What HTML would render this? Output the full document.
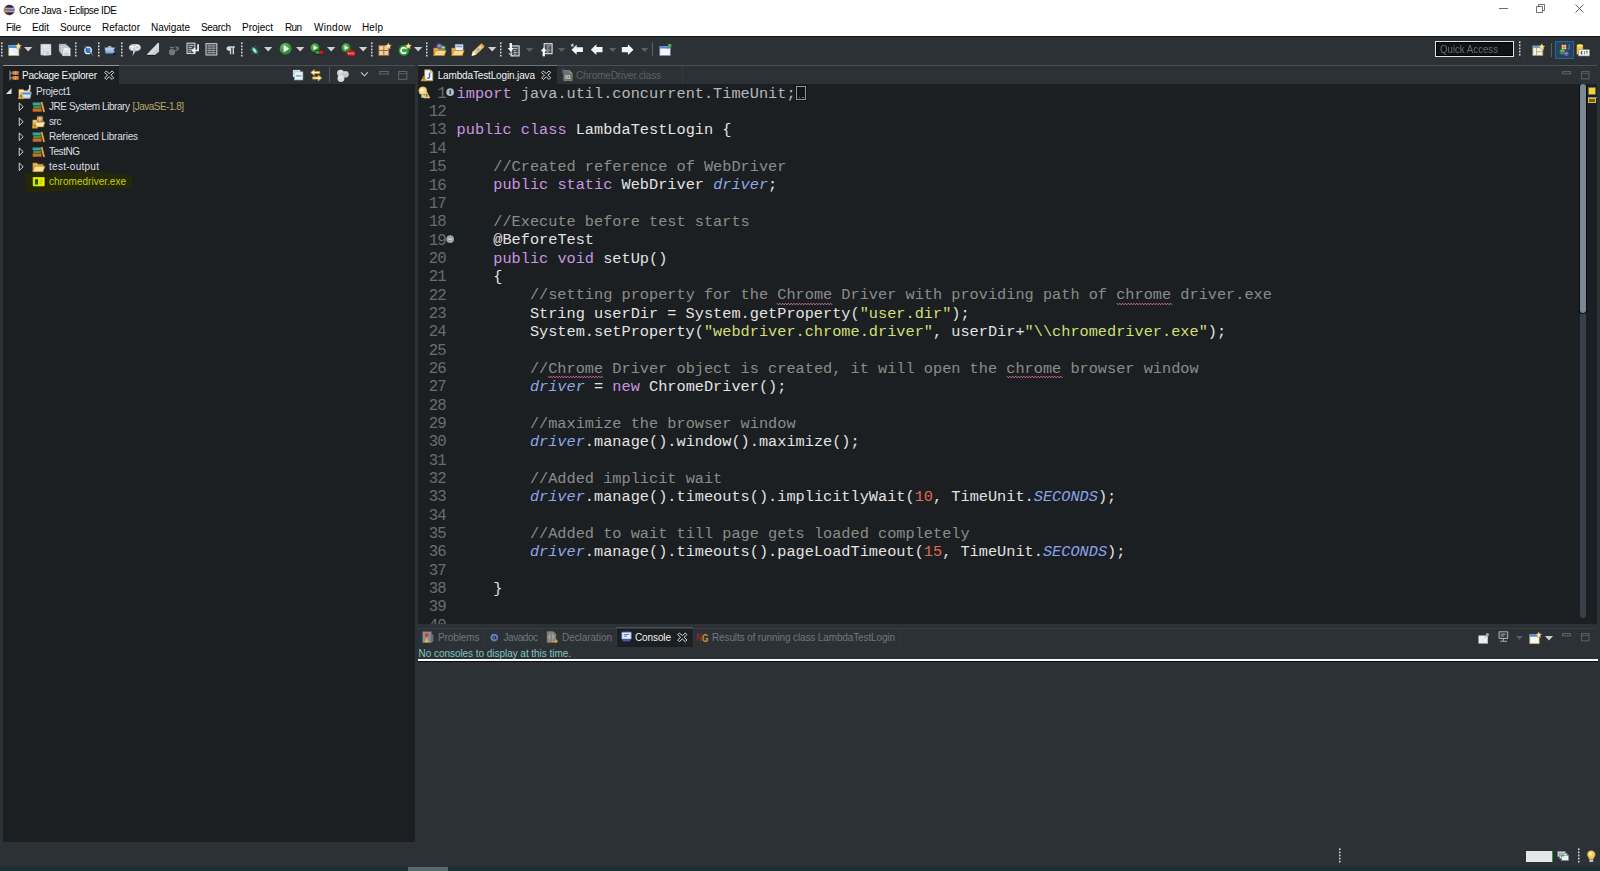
<!DOCTYPE html>
<html lang="en">
<head>
<meta charset="utf-8">
<title>Core Java - Eclipse IDE</title>
<style>
*{box-sizing:border-box;margin:0;padding:0}
html,body{width:1600px;height:871px;overflow:hidden;background:#2c3135}
body{position:relative;font-family:"Liberation Sans",sans-serif;font-size:10px;color:#e6e6e6}
.abs{position:absolute}
.t{position:absolute;white-space:nowrap;line-height:12px;height:12px}
.dark{background:#1c1f22}
#code{font-family:"Liberation Mono",monospace;font-size:15.28px;line-height:18.355px;color:#e3e3e3}
#code div{height:18.355px;white-space:pre}
#lnum{width:28.3px;text-align:right;font-family:"Liberation Mono",monospace;font-size:15.7px;letter-spacing:-0.9px;line-height:18.355px;color:#6b6c6a}
#lnum div{height:18.355px}
.k{color:#c896e0}.c{color:#8b8c88}.s{color:#d3df75}.n{color:#e0685a}.f{color:#8fa6e8;font-style:italic}.i{color:#b4b8bc}.sc{color:#88a3ee;font-style:italic}
svg{position:absolute;overflow:visible}
</style>
</head>
<body>
<div class="abs" style="left:0px;top:0px;width:1600px;height:36px;background:#fff;"></div>
<svg style="left:2.80px;top:3.60px" width="12.00" height="12.00" viewBox="0 0 16 16"><circle cx="8" cy="8" r="7.300" fill="#f2941e"/><circle cx="8.800" cy="8" r="6.800" fill="#2c2255"/><path d="M2.500 5.700h12.800M2 8h13.600M2.500 10.300h12.800" stroke="#f4f4fa" stroke-width="1.100"/></svg>
<svg style="left:1499px;top:8px" width="9" height="1" viewBox="0 0 9 1"><rect width="9" height=".8" fill="#4a4a4a"/></svg>
<svg style="left:1536px;top:4px" width="9" height="9" viewBox="0 0 9 9"><path d="M.5 2.500h6v6h-6zM2.500 2.500V.5h6v6H6.500" fill="none" stroke="#444" stroke-width=".75"/></svg>
<svg style="left:1575px;top:4px" width="9" height="9" viewBox="0 0 9 9"><path d="M.5.5l8 8M8.500.5l-8 8" stroke="#333" stroke-width=".8"/></svg>
<div class="abs" style="left:0px;top:36px;width:1600px;height:1px;background:#121416;"></div>
<svg style="left:1.00px;top:42.00px" width="2" height="15" viewBox="0 0 2 15"><rect x="0" y="0.40" width="1.5" height="1.7" fill="#dcdcdc"/><rect x="0" y="3.50" width="1.5" height="1.7" fill="#dcdcdc"/><rect x="0" y="6.60" width="1.5" height="1.7" fill="#dcdcdc"/><rect x="0" y="9.70" width="1.5" height="1.7" fill="#dcdcdc"/><rect x="0" y="12.80" width="1.5" height="1.7" fill="#dcdcdc"/></svg>
<svg style="left:7.50px;top:42.70px" width="13.33" height="13.33" viewBox="0 0 16 16"><defs><linearGradient id="gnew" x1="0" y1="1" x2="1" y2="0"><stop offset="0" stop-color="#ffffff"/><stop offset="1" stop-color="#cfe4fa"/></linearGradient></defs><rect x="1" y="3" width="12" height="12" fill="url(#gnew)" stroke="#d8b866" stroke-width=".9"/><rect x="1" y="3" width="12" height="3" fill="#3f8fdc"/><path d="M12.500 0l1.100 2.400 2.400.4-1.800 1.700.5 2.500-2.200-1.300-2.200 1.300.5-2.500L9 2.800l2.400-.4z" fill="#fbe9ae" stroke="#d9a93a" stroke-width=".6"/></svg>
<svg style="left:24.00px;top:47.00px" width="8.4" height="5" viewBox="0 0 8.4 5"><path d="M0 0H8.4L4.2 4.6Z" fill="#d0d0d0"/></svg>
<svg style="left:39.00px;top:42.70px" width="13.33" height="13.33" viewBox="0 0 16 16"><path d="M1.500 1h12.500l1 1v13H1.500z" fill="#dfe1e4" stroke="#0f1113" stroke-width=".6"/><rect x="4" y="1.800" width="8.500" height="5.200" fill="#f3f4f5" stroke="#b4b7bb" stroke-width=".5"/><path d="M5 3.500h6.500M5 5.200h6.500" stroke="#c4c7cb" stroke-width=".6"/><rect x="4.500" y="10" width="7.500" height="5" fill="#c9ccd0"/><rect x="6" y="11" width="2" height="3.500" fill="#eceef0"/></svg>
<svg style="left:58.00px;top:42.70px" width="13.33" height="13.33" viewBox="0 0 16 16"><path d="M1 1h8.500l1.500 1.500V11H1z" fill="#d3d6d9" stroke="#0f1113" stroke-width=".5"/><path d="M3 3h8.500L13 4.500V13H3z" fill="#dcdfe2" stroke="#7d8186" stroke-width=".5"/><path d="M5 5h8.500L15 6.500V15.500H5z" fill="#e4e6e9" stroke="#7d8186" stroke-width=".5"/><rect x="7" y="6" width="5.500" height="3.300" fill="#f5f6f7" stroke="#b4b7bb" stroke-width=".4"/><rect x="7.500" y="11.500" width="5" height="4" fill="#c9ccd0"/></svg>
<svg style="left:75.00px;top:42.00px" width="2" height="15" viewBox="0 0 2 15"><rect x="0" y="0.40" width="1.5" height="1.7" fill="#dcdcdc"/><rect x="0" y="3.50" width="1.5" height="1.7" fill="#dcdcdc"/><rect x="0" y="6.60" width="1.5" height="1.7" fill="#dcdcdc"/><rect x="0" y="9.70" width="1.5" height="1.7" fill="#dcdcdc"/><rect x="0" y="12.80" width="1.5" height="1.7" fill="#dcdcdc"/></svg>
<svg style="left:80.50px;top:42.70px" width="13.33" height="13.33" viewBox="0 0 16 16"><circle cx="8.500" cy="9" r="3.900" fill="#2f80c8" stroke="#e4ecf5" stroke-width="1.500"/><path d="M3.500 3.500l10.500 11.500" stroke="#1f3f86" stroke-width="1.300"/><path d="M4.200 3.500l10.500 11.500" stroke="#dbe6f3" stroke-width=".5"/></svg>
<svg style="left:98.00px;top:42.00px" width="2" height="15" viewBox="0 0 2 15"><rect x="0" y="0.40" width="1.5" height="1.7" fill="#dcdcdc"/><rect x="0" y="3.50" width="1.5" height="1.7" fill="#dcdcdc"/><rect x="0" y="6.60" width="1.5" height="1.7" fill="#dcdcdc"/><rect x="0" y="9.70" width="1.5" height="1.7" fill="#dcdcdc"/><rect x="0" y="12.80" width="1.5" height="1.7" fill="#dcdcdc"/></svg>
<svg style="left:103.00px;top:42.70px" width="13.33" height="13.33" viewBox="0 0 16 16"><defs><linearGradient id="gbf" x1="0" y1="0" x2="0" y2="1"><stop offset="0" stop-color="#c4d8f2"/><stop offset="1" stop-color="#7fa6de"/></linearGradient></defs><path d="M2 5.500h12.500l-1.500 3 1.500 4H3z" fill="url(#gbf)" stroke="#3f66a8" stroke-width=".6"/><path d="M5.500 5.500c0-2 5-2 5 0" fill="#f1e4cf" stroke="#c8b48f" stroke-width=".5"/><path d="M12.500 11l3 2-3 2z" fill="#0c0d0f"/></svg>
<svg style="left:121.40px;top:42.00px" width="2" height="15" viewBox="0 0 2 15"><rect x="0" y="0.40" width="1.5" height="1.7" fill="#dcdcdc"/><rect x="0" y="3.50" width="1.5" height="1.7" fill="#dcdcdc"/><rect x="0" y="6.60" width="1.5" height="1.7" fill="#dcdcdc"/><rect x="0" y="9.70" width="1.5" height="1.7" fill="#dcdcdc"/><rect x="0" y="12.80" width="1.5" height="1.7" fill="#dcdcdc"/></svg>
<svg style="left:127.50px;top:42.70px" width="13.33" height="13.33" viewBox="0 0 16 16"><path d="M1 5.500C1 3 3.400 1.200 7 1.200h3c3.500 0 5.500 1.800 5.500 4.300S13.500 9.800 10 9.800H9L5.500 15.500l.7-5.800C3 9.500 1 8 1 5.500z" fill="#c6c9cd"/><circle cx="11" cy="5.200" r="2.300" fill="#c6c9cd" stroke="#fafafa" stroke-width="1.200"/><rect x="2.300" y="3.600" width="5.500" height="1.600" fill="#fafafa"/><rect x="4.200" y="3.600" width="1.700" height="4.800" fill="#fafafa"/></svg>
<svg style="left:146.50px;top:42.70px" width="13.33" height="13.33" viewBox="0 0 16 16"><defs><linearGradient id="gtri" x1="0" y1="0" x2="1" y2="1"><stop offset="0" stop-color="#ffffff"/><stop offset="1" stop-color="#b9bcc0"/></linearGradient></defs><path d="M13 0h1.500v10.500L9.500 14.500H0V13.500z" fill="url(#gtri)"/><path d="M0 14.800h9" stroke="#0c0d0f" stroke-width=".8"/></svg>
<svg style="left:166.50px;top:42.70px" width="13.33" height="13.33" viewBox="0 0 16 16"><circle cx="6" cy="11" r="3.700" fill="#74787d"/><path d="M3.500 5.500h5" stroke="#74787d" stroke-width="1.600"/><path d="M10.500 3.500l1.500 3.500M13 4.500l.8 3.500M9.500 9.500l4.500-2" stroke="#74787d" stroke-width="1.400" fill="none"/></svg>
<svg style="left:185.50px;top:42.70px" width="13.33" height="13.33" viewBox="0 0 16 16"><rect x="1.200" y=".2" width="9.500" height="12.500" fill="#45494f" stroke="#dcdee0" stroke-width="1.200"/><path d="M3 3h6M3 5.500h4M3 8h5.500M3 10.500h3" stroke="#cfd2d5" stroke-width="1"/><path d="M14.500 1.500v7.500H8.500M11 6.200L8 9l3 2.800" stroke="#f4f4f4" stroke-width="2" fill="none"/></svg>
<svg style="left:204.50px;top:42.70px" width="13.33" height="13.33" viewBox="0 0 16 16"><rect x="1.200" y=".8" width="13" height="13.600" fill="#3b3f45" stroke="#d6d8db" stroke-width="1.200"/><path d="M3 3.500h9.500M3 6.200h9.500M3 8.900h9.500M3 11.600h9.500" stroke="#c9ccd0" stroke-width="1"/><path d="M5 1.500v12.500M10.500 1.500v12.500" stroke="#8a8e93" stroke-width=".7"/></svg>
<svg style="left:224.00px;top:42.70px" width="13.33" height="13.33" viewBox="0 0 16 16"><path d="M3.500 4h9.500v1.600H12V13.500h-1.700V5.600H8.700V13.500H7V9.500C4.800 9.500 3 8.300 3 6.700S4.500 4 6 4z" fill="#d3d5d8"/></svg>
<svg style="left:240.50px;top:42.00px" width="2" height="15" viewBox="0 0 2 15"><rect x="0" y="0.40" width="1.5" height="1.7" fill="#dcdcdc"/><rect x="0" y="3.50" width="1.5" height="1.7" fill="#dcdcdc"/><rect x="0" y="6.60" width="1.5" height="1.7" fill="#dcdcdc"/><rect x="0" y="9.70" width="1.5" height="1.7" fill="#dcdcdc"/><rect x="0" y="12.80" width="1.5" height="1.7" fill="#dcdcdc"/></svg>
<svg style="left:247.50px;top:42.70px" width="13.33" height="13.33" viewBox="0 0 16 16"><path d="M4 4l2.500 2.500M2.500 8.500l2.500.5M4 14l2-2M8.500 2.500l.5 2.500M12.500 5l-2 1.500M14 10l-2.500-.3M12.500 15l-1.500-2.500" stroke="#3c6f5c" stroke-width=".9"/><ellipse cx="8" cy="9" rx="2.700" ry="4.800" fill="#2f8f78" transform="rotate(-38 8 9)"/><ellipse cx="8" cy="9" rx="1.300" ry="3" fill="#cfe9e0" transform="rotate(-38 8 9)"/></svg>
<svg style="left:263.70px;top:47.00px" width="8.4" height="5" viewBox="0 0 8.4 5"><path d="M0 0H8.4L4.2 4.6Z" fill="#d0d0d0"/></svg>
<svg style="left:278.80px;top:42.20px" width="13.33" height="13.33" viewBox="0 0 16 16"><defs><radialGradient id="grun" cx=".4" cy=".3" r=".8"><stop offset="0" stop-color="#63bd5c"/><stop offset="1" stop-color="#1f7a22"/></radialGradient></defs><circle cx="8" cy="8" r="7.200" fill="url(#grun)"/><path d="M5.600 3.600L12.300 8 5.600 12.400z" fill="#fff"/></svg>
<svg style="left:295.70px;top:47.00px" width="8.4" height="5" viewBox="0 0 8.4 5"><path d="M0 0H8.4L4.2 4.6Z" fill="#d0d0d0"/></svg>
<svg style="left:310.00px;top:42.70px" width="13.33" height="13.33" viewBox="0 0 16 16"><circle cx="6" cy="5.800" r="5.400" fill="url(#grun)"/><path d="M4.300 2.900L9.200 5.800 4.300 8.700z" fill="#fff"/><rect x="6" y="9.300" width="9.800" height="3.900" rx="1" fill="#19b52a" stroke="#0c0d0f" stroke-width=".6"/><path d="M11 9.300h3.800a1 1 0 0 1 1 1v1.900a1 1 0 0 1-1 1H11z" fill="#e3120f"/></svg>
<svg style="left:326.70px;top:47.00px" width="8.4" height="5" viewBox="0 0 8.4 5"><path d="M0 0H8.4L4.2 4.6Z" fill="#d0d0d0"/></svg>
<svg style="left:341.40px;top:42.70px" width="13.33" height="13.33" viewBox="0 0 16 16"><circle cx="6" cy="5.800" r="5.400" fill="url(#grun)"/><path d="M4.300 2.900L9.200 5.800 4.300 8.700z" fill="#fff"/><rect x="7.500" y="10" width="9.500" height="5.300" rx=".6" fill="#dd1f1c" stroke="#7d100e" stroke-width=".5"/><path d="M10 10V8.600h3.500V10" stroke="#dd1f1c" stroke-width="1.200" fill="none"/><path d="M7 12.300h9.500" stroke="#f6a5a3" stroke-width=".7"/><path d="M9 11v3.500M11.700 11v3.500M14.400 11v3.500" stroke="#f6a5a3" stroke-width=".5"/></svg>
<svg style="left:359.00px;top:47.00px" width="8.4" height="5" viewBox="0 0 8.4 5"><path d="M0 0H8.4L4.2 4.6Z" fill="#d0d0d0"/></svg>
<svg style="left:371.40px;top:42.00px" width="2" height="15" viewBox="0 0 2 15"><rect x="0" y="0.40" width="1.5" height="1.7" fill="#dcdcdc"/><rect x="0" y="3.50" width="1.5" height="1.7" fill="#dcdcdc"/><rect x="0" y="6.60" width="1.5" height="1.7" fill="#dcdcdc"/><rect x="0" y="9.70" width="1.5" height="1.7" fill="#dcdcdc"/><rect x="0" y="12.80" width="1.5" height="1.7" fill="#dcdcdc"/></svg>
<svg style="left:378.00px;top:42.70px" width="13.33" height="13.33" viewBox="0 0 16 16"><rect x="1" y="3" width="12" height="12" fill="#efcfa3" stroke="#9a5f34" stroke-width=".9"/><path d="M7 3v12M1 9h12" stroke="#9a5f34" stroke-width="1.100"/><path d="M12.500 0l1.100 2.400 2.400.4-1.800 1.700.5 2.500-2.200-1.300-2.200 1.300.5-2.500L9 2.800l2.400-.4z" fill="#fbe9ae" stroke="#d9a93a" stroke-width=".6"/></svg>
<svg style="left:398.00px;top:42.70px" width="13.33" height="13.33" viewBox="0 0 16 16"><circle cx="7" cy="9" r="6.500" fill="#1d8a30"/><circle cx="7" cy="9" r="5.400" fill="#35a646"/><path d="M9.600 6.800A3.400 3.400 0 1 0 9.600 11.200" stroke="#fff" stroke-width="1.900" fill="none"/><path d="M12.500 0l1.100 2.400 2.400.4-1.800 1.700.5 2.500-2.200-1.300-2.200 1.300.5-2.500L9 2.800l2.400-.4z" fill="#fbe9ae" stroke="#d9a93a" stroke-width=".6"/></svg>
<svg style="left:413.70px;top:47.00px" width="8.4" height="5" viewBox="0 0 8.4 5"><path d="M0 0H8.4L4.2 4.6Z" fill="#d0d0d0"/></svg>
<svg style="left:426.30px;top:42.00px" width="2" height="15" viewBox="0 0 2 15"><rect x="0" y="0.40" width="1.5" height="1.7" fill="#dcdcdc"/><rect x="0" y="3.50" width="1.5" height="1.7" fill="#dcdcdc"/><rect x="0" y="6.60" width="1.5" height="1.7" fill="#dcdcdc"/><rect x="0" y="9.70" width="1.5" height="1.7" fill="#dcdcdc"/><rect x="0" y="12.80" width="1.5" height="1.7" fill="#dcdcdc"/></svg>
<svg style="left:432.50px;top:42.70px" width="13.33" height="13.33" viewBox="0 0 16 16"><path d="M.8 6h5l1.200 1.500h7V15H.8z" fill="#e8b04a" stroke="#a8741c" stroke-width=".7"/><path d="M.8 15l2.700-6h12.500l-2.500 6z" fill="#fbd88a" stroke="#a8741c" stroke-width=".7"/><circle cx="7.500" cy="4" r="3.300" fill="#7b5bb8"/><circle cx="12.200" cy="5.800" r="2.900" fill="#4fae5a"/><path d="M6 3.500h3M10.800 5.300h2.800" stroke="#e7e0f5" stroke-width=".9"/></svg>
<svg style="left:451.00px;top:42.70px" width="13.33" height="13.33" viewBox="0 0 16 16"><path d="M.8 6h5l1.200 1.500h7V15H.8z" fill="#e8b04a" stroke="#a8741c" stroke-width=".7"/><rect x="5" y="1.500" width="9.500" height="8" fill="#eef1f6" stroke="#8793a8" stroke-width=".7"/><rect x="6.300" y="3" width="7" height="2.200" fill="#7fa2d8"/><path d="M.8 15l2.700-6h12.500l-2.500 6z" fill="#fbd88a" stroke="#a8741c" stroke-width=".7"/></svg>
<svg style="left:470.70px;top:42.70px" width="13.33" height="13.33" viewBox="0 0 16 16"><defs><linearGradient id="gpen" x1="0" y1="0" x2="1" y2="1"><stop offset="0" stop-color="#fff2c4"/><stop offset="1" stop-color="#e2a23a"/></linearGradient></defs><path d="M.8 15.200l1.500-5L11.500 1.500 15.500 5 6 14z" fill="url(#gpen)" stroke="#b07a1c" stroke-width=".6"/><path d="M5.500 7.500l3.800 3.500 2.400-2.400-3.800-3.500z" fill="#b3adb5"/><path d="M.8 15.200l1.500-5L6 14z" fill="#fffdf2"/><path d="M11.500 1.500l1.200-1L16 3.500l-.5 1.500z" fill="#f2c86a" stroke="#b07a1c" stroke-width=".5"/></svg>
<svg style="left:488.30px;top:47.00px" width="8.4" height="5" viewBox="0 0 8.4 5"><path d="M0 0H8.4L4.2 4.6Z" fill="#d0d0d0"/></svg>
<svg style="left:500.40px;top:42.00px" width="2" height="15" viewBox="0 0 2 15"><rect x="0" y="0.40" width="1.5" height="1.7" fill="#dcdcdc"/><rect x="0" y="3.50" width="1.5" height="1.7" fill="#dcdcdc"/><rect x="0" y="6.60" width="1.5" height="1.7" fill="#dcdcdc"/><rect x="0" y="9.70" width="1.5" height="1.7" fill="#dcdcdc"/><rect x="0" y="12.80" width="1.5" height="1.7" fill="#dcdcdc"/></svg>
<svg style="left:507.00px;top:42.70px" width="13.33" height="13.33" viewBox="0 0 16 16"><rect x="5" y="3.500" width="9.500" height="12" fill="#4a4e54" stroke="#e4e6e8" stroke-width="1.300"/><path d="M8 6.500h4.500M8 9h2.500M8 11.500h4.500M8 13.500h2.500" stroke="#d0d3d6" stroke-width="1"/><path d="M4.500 0v7.500" stroke="#f6f6f6" stroke-width="2.800"/><path d="M.8 6h7.400L4.500 10.500z" fill="#f6f6f6"/><path d="M2 12.500l5 3" stroke="#e8e8e8" stroke-width="1.200"/></svg>
<svg style="left:526.40px;top:47.50px" width="7.2" height="4.3" viewBox="0 0 8.4 5"><path d="M0 0H8.4L4.2 4.6Z" fill="#5b6066"/></svg>
<svg style="left:539.50px;top:42.70px" width="13.33" height="13.33" viewBox="0 0 16 16"><rect x="5" y=".8" width="9.500" height="12" fill="#4a4e54" stroke="#e4e6e8" stroke-width="1.300"/><path d="M8 3.500h4.500M8 6h2.500M8 8.500h4.500M8 10.800h2.500" stroke="#d0d3d6" stroke-width="1"/><path d="M4.500 16v-7.500" stroke="#f6f6f6" stroke-width="2.800"/><path d="M.8 10h7.400L4.500 5.500z" fill="#f6f6f6"/></svg>
<svg style="left:558.40px;top:47.50px" width="7.2" height="4.3" viewBox="0 0 8.4 5"><path d="M0 0H8.4L4.2 4.6Z" fill="#5b6066"/></svg>
<svg style="left:570.00px;top:42.70px" width="13.33" height="13.33" viewBox="0 0 16 16"><path d="M8 2L1.800 8 8 14v-3.200H15.500V5.200H8z" fill="#f6f6f6"/><path d="M2.800 0l.7 1.700 1.800.2-1.400 1.200.4 1.800-1.500-.9-1.500.9.400-1.800L.3 1.900l1.800-.2z" fill="#d4d4d4"/></svg>
<svg style="left:590.00px;top:42.70px" width="13.33" height="13.33" viewBox="0 0 16 16"><path d="M7.700 1.500L1 8l6.700 6.500v-3.400H15V4.900H7.700z" fill="#f6f6f6"/></svg>
<svg style="left:608.60px;top:47.50px" width="7.2" height="4.3" viewBox="0 0 8.4 5"><path d="M0 0H8.4L4.2 4.6Z" fill="#5b6066"/></svg>
<svg style="left:621.00px;top:42.70px" width="13.33" height="13.33" viewBox="0 0 16 16"><path d="M8.300 1.500L15 8l-6.700 6.500v-3.400H1V4.900H8.300z" fill="#f6f6f6"/></svg>
<svg style="left:640.60px;top:47.50px" width="7.2" height="4.3" viewBox="0 0 8.4 5"><path d="M0 0H8.4L4.2 4.6Z" fill="#5b6066"/></svg>
<div class="abs" style="left:652.30px;top:42.00px;width:1px;height:14.00px;background:#5a5f64"></div>
<svg style="left:658.70px;top:42.70px" width="13.33" height="13.33" viewBox="0 0 16 16"><rect x="1" y="4" width="12.500" height="11" fill="#f4f6fa" stroke="#8a93a8" stroke-width=".8"/><rect x="1" y="4" width="12.500" height="2.600" fill="#4a8ad4"/><path d="M9.500 7.500l3-3" stroke="#777" stroke-width="1"/><path d="M11.500 1l3.500 3.500-1.500.5-2.500-2.500z" fill="#3fa03f" stroke="#2a7a2a" stroke-width=".6"/><circle cx="13" cy="2.800" r="1.800" fill="#4fb84f"/></svg>
<div class="abs" style="left:1434.5px;top:40.5px;width:79.5px;height:16.5px;background:#101214;border:1px solid #e4e4e4;box-shadow:inset 0 0 0 1px #000"></div>
<svg style="left:1518.60px;top:41.00px" width="2" height="16" viewBox="0 0 2 16"><rect x="0" y="0.40" width="1.5" height="1.7" fill="#dcdcdc"/><rect x="0" y="3.50" width="1.5" height="1.7" fill="#dcdcdc"/><rect x="0" y="6.60" width="1.5" height="1.7" fill="#dcdcdc"/><rect x="0" y="9.70" width="1.5" height="1.7" fill="#dcdcdc"/><rect x="0" y="12.80" width="1.5" height="1.7" fill="#dcdcdc"/></svg>
<div class="abs" style="left:1524px;top:37px;width:1px;height:28px;background:#33373c;"></div>
<svg style="left:1532.00px;top:43.00px" width="13.33" height="13.33" viewBox="0 0 16 16"><rect x="1" y="3.500" width="12" height="11.500" fill="#e9f3fb" stroke="#b8923a" stroke-width=".9"/><rect x="1" y="3.500" width="12" height="2.400" fill="#5a9fe0"/><path d="M5.500 6v9M5.500 10.500h7.500" stroke="#b8923a" stroke-width=".9"/><path d="M11.800 1l1.100 2.400 2.400.4-1.800 1.700.5 2.500-2.200-1.300-2.200 1.300.5-2.500-1.800-1.700 2.400-.4z" fill="#fbe9ae" stroke="#d9a93a" stroke-width=".6"/></svg>
<div class="abs" style="left:1551.00px;top:43.00px;width:1px;height:14.00px;background:#5a5f64"></div>
<div class="abs" style="left:1555px;top:41px;width:19px;height:17.5px;background:#25425f;border:1px solid #2c6397"></div>
<svg style="left:1558.00px;top:43.00px" width="13.33" height="13.33" viewBox="0 0 16 16"><rect x="4" y="2" width="6" height="6" fill="#f3dcae" stroke="#7a2d1c" stroke-width=".8"/><path d="M7 2v6M4 5h6" stroke="#a85a32" stroke-width=".8"/><path d="M13.500 1.500v4.200c0 1.300-1 2-2.300 1.700" stroke="#4f76a8" stroke-width="1.500" fill="none"/><circle cx="5.300" cy="10.500" r="3.400" fill="#2f9440"/><ellipse cx="5.300" cy="9.300" rx="2.200" ry="1.100" fill="#6fc27a"/><circle cx="10" cy="13" r="2.900" fill="#7453b0"/><ellipse cx="10" cy="12.200" rx="1.800" ry=".9" fill="#a58fd6"/></svg>
<svg style="left:1576.00px;top:42.60px" width="13.80" height="13.80" viewBox="0 0 16 16"><path d="M1 3c0-1.800 7-1.800 7 0v9.500c0 1.800-7 1.800-7 0z" fill="#f6cf3c" stroke="#b78d1c" stroke-width=".6"/><ellipse cx="4.500" cy="3" rx="3.500" ry="1.300" fill="#fce88a"/><path d="M1 6.300c0 1.700 7 1.700 7 0" stroke="#d9a92a" stroke-width=".6" fill="none"/><rect x="3" y="7.800" width="12.500" height="7.200" fill="#fbfbfb" stroke="#8f959c" stroke-width=".7"/><path d="M7.500 9.800c-2-.5-2 3.500 0 3" stroke="#222" stroke-width="1.200" fill="none"/><path d="M9.800 9.500v3.600" stroke="#d8433a" stroke-width="1.100"/><path d="M12.700 9.500v3.600M11.500 9.900h2.400" stroke="#2f9e44" stroke-width="1.100"/></svg>
<div class="abs" style="left:3px;top:65px;width:412px;height:1px;background:#4b5055;"></div>
<div class="abs" style="left:3px;top:65px;width:116px;height:1px;background:#8f959a;"></div>
<div class="abs" style="left:418px;top:65px;width:1179px;height:1px;background:#4b5055;"></div>
<div class="abs" style="left:418px;top:65px;width:139px;height:1px;background:#70767b;"></div>
<div class="abs" style="left:3px;top:66px;width:115.5px;height:18px;background:#1c1f22;"></div>
<div class="abs" style="left:3px;top:84px;width:412px;height:758px;background:#1c1f22;"></div>
<svg style="left:8.50px;top:69.50px" width="11.00" height="11.00" viewBox="0 0 16 16"><path d="M1.500 1v14M1.500 4.500h3M1.500 11.500h3" stroke="#c9ccd0" stroke-width="1.100" fill="none"/><rect x="5" y="1.500" width="9" height="5.500" fill="#c8792e"/><rect x="5" y="8.800" width="9" height="5.500" fill="#c8792e"/><path d="M9.500 1.500V7M5 4.200h9M9.500 8.800v5.500M5 11.500h9" stroke="#f0b57c" stroke-width=".9"/></svg>
<svg style="left:103.70px;top:70.30px" width="10.40" height="10.40" viewBox="0 0 16 16"><path d="M3.500 1.500L8 5.500l4.500-4L15 4l-4.500 4 4.500 4-2.500 2.500L8 10.500l-4.500 4L1 12l4.500-4L1 4z" fill="#15171a" stroke="#f0f0f0" stroke-width="1.350" stroke-linejoin="miter"/></svg>
<svg style="left:292.00px;top:69.10px" width="12.00" height="12.00" viewBox="0 0 16 16"><rect x="1" y="1" width="10.500" height="10" fill="#cfe3ea" stroke="#0e1012" stroke-width=".5"/><rect x="3.500" y="3.800" width="11" height="10.800" fill="#e4f3f3" stroke="#a9bccb" stroke-width=".8"/><path d="M5.500 9.200h7" stroke="#3d6fb2" stroke-width="1.200"/></svg>
<svg style="left:310.00px;top:69.00px" width="12.50" height="12.50" viewBox="0 0 16 16"><path d="M5.500 .8L1 4.500l4.500 3.700V5.900h7V3.100h-7z" fill="#fff1cc" stroke="#dd9a2c" stroke-width="1"/><path d="M10.500 7.800L15 11.500l-4.500 3.700v-2.300h-7v-2.800h7z" fill="#fff1cc" stroke="#dd9a2c" stroke-width="1"/></svg>
<div class="abs" style="left:329.00px;top:67.00px;width:1px;height:15.00px;background:#555a5f"></div>
<svg style="left:336.20px;top:68.70px" width="13.20" height="13.20" viewBox="0 0 16 16"><circle cx="5.500" cy="5" r="4.200" fill="#d2d3d5"/><circle cx="11.500" cy="6.500" r="4" fill="#c3c4c6"/><circle cx="6" cy="11.500" r="4.200" fill="#d8d9db"/><ellipse cx="5.500" cy="3.300" rx="2.600" ry="1.100" fill="#e6e7e8"/><ellipse cx="11.500" cy="4.800" rx="2.500" ry="1" fill="#d9dadb"/><ellipse cx="6" cy="9.800" rx="2.600" ry="1.100" fill="#ebeced"/></svg>
<svg style="left:358.80px;top:69.30px" width="10.80" height="10.80" viewBox="0 0 16 16"><path d="M3 5l5 5 5-5" stroke="#cfd2d5" stroke-width="1.500" fill="none"/></svg>
<svg style="left:378.5px;top:71px" width="10" height="3.500" viewBox="0 0 11.200 4"><rect x=".6" y=".6" width="10" height="2.800" fill="none" stroke="#62676c" stroke-width="1.200"/></svg>
<svg style="left:398px;top:71px" width="9.500" height="8.800" viewBox="0 0 11 10.500"><rect x=".6" y=".6" width="9.800" height="9.300" fill="none" stroke="#62676c" stroke-width="1.200"/><path d="M.6 3.200h9.800" stroke="#62676c" stroke-width="1"/></svg>
<svg style="left:4.6px;top:86.8px" width="7" height="7.500" viewBox="0 0 8 8.500"><path d="M7.500 1.500V8H1z" fill="#d9dbde"/></svg>
<svg style="left:17.70px;top:84.60px" width="14.00" height="14.00" viewBox="0 0 16 16"><path d="M1 5h5l1.200 1.500H14V15H1z" fill="#fbe2a2" stroke="#c99a3c" stroke-width=".7"/><path d="M4 8.500h11.500L13.500 15H2z" fill="#cfe3f7" stroke="#6a93c4" stroke-width=".7"/><path d="M5 10h9.500" stroke="#4a86d0" stroke-width="1.600"/><path d="M13.500 0v4.200c0 1.200-1 1.800-2.300 1.500" stroke="#e8eefc" stroke-width="1.600" fill="none"/><path d="M3.500 9.500L7 15.800H0z" fill="#f1bd4b" stroke="#c18d20" stroke-width=".5"/><path d="M3.500 11.500v2.200M3.500 14.300v.8" stroke="#3a2a00" stroke-width="1"/></svg>
<svg style="left:18px;top:101.9px" width="6" height="9.500" viewBox="0 0 7.500 12"><path d="M1.500 1.200L6.500 6 1.500 10.800z" fill="none" stroke="#e2e4e6" stroke-width="1.150"/></svg>
<svg style="left:31.50px;top:99.90px" width="13.33" height="13.33" viewBox="0 0 16 16"><rect x="1" y="3" width="9.500" height="3.300" fill="#3fa0a0" stroke="#1f6d6d" stroke-width=".5"/><rect x="1.500" y="6.600" width="9.500" height="3.300" fill="#4a8f4a" stroke="#2b612b" stroke-width=".5"/><rect x="1" y="10.200" width="10.500" height="4" fill="#c9702c" stroke="#8a4513" stroke-width=".5"/><path d="M11.500 2.500l3 12" stroke="#e8a23a" stroke-width="2.200"/></svg>
<svg style="left:18px;top:117.1px" width="6" height="9.500" viewBox="0 0 7.500 12"><path d="M1.500 1.200L6.500 6 1.500 10.800z" fill="none" stroke="#e2e4e6" stroke-width="1.150"/></svg>
<svg style="left:31.50px;top:115.10px" width="13.33" height="13.33" viewBox="0 0 16 16"><path d="M1 6h5l1.200 1.500H14V14H1z" fill="#f3cf7e" stroke="#c99a3c" stroke-width=".7"/><path d="M1 14l2.500-5h12L13 14z" fill="#fdeab8" stroke="#c99a3c" stroke-width=".7"/><rect x="6" y="1.500" width="7" height="6" fill="#c98f56" stroke="#8a5a2c" stroke-width=".6"/><path d="M9.500 1.500v6M6 4.500h7" stroke="#f3dcc0" stroke-width=".9"/><path d="M3.500 9.500L7 15.800H0z" fill="#f1bd4b" stroke="#c18d20" stroke-width=".5"/><path d="M3.500 11.500v2.200M3.500 14.300v.8" stroke="#3a2a00" stroke-width="1"/></svg>
<svg style="left:18px;top:131.9px" width="6" height="9.500" viewBox="0 0 7.500 12"><path d="M1.500 1.200L6.500 6 1.500 10.800z" fill="none" stroke="#e2e4e6" stroke-width="1.150"/></svg>
<svg style="left:31.50px;top:129.90px" width="13.33" height="13.33" viewBox="0 0 16 16"><rect x="1" y="3" width="9.500" height="3.300" fill="#3fa0a0" stroke="#1f6d6d" stroke-width=".5"/><rect x="1.500" y="6.600" width="9.500" height="3.300" fill="#4a8f4a" stroke="#2b612b" stroke-width=".5"/><rect x="1" y="10.200" width="10.500" height="4" fill="#c9702c" stroke="#8a4513" stroke-width=".5"/><path d="M11.500 2.500l3 12" stroke="#e8a23a" stroke-width="2.200"/></svg>
<svg style="left:18px;top:146.9px" width="6" height="9.500" viewBox="0 0 7.500 12"><path d="M1.500 1.200L6.500 6 1.500 10.800z" fill="none" stroke="#e2e4e6" stroke-width="1.150"/></svg>
<svg style="left:31.50px;top:144.90px" width="13.33" height="13.33" viewBox="0 0 16 16"><rect x="1" y="3" width="9.500" height="3.300" fill="#3fa0a0" stroke="#1f6d6d" stroke-width=".5"/><rect x="1.500" y="6.600" width="9.500" height="3.300" fill="#4a8f4a" stroke="#2b612b" stroke-width=".5"/><rect x="1" y="10.200" width="10.500" height="4" fill="#c9702c" stroke="#8a4513" stroke-width=".5"/><path d="M11.500 2.500l3 12" stroke="#e8a23a" stroke-width="2.200"/></svg>
<svg style="left:18px;top:162.1px" width="6" height="9.500" viewBox="0 0 7.500 12"><path d="M1.500 1.200L6.500 6 1.500 10.800z" fill="none" stroke="#e2e4e6" stroke-width="1.150"/></svg>
<svg style="left:31.50px;top:160.10px" width="13.33" height="13.33" viewBox="0 0 16 16"><path d="M1 3.500h5l1.200 1.500H13.500V14H1z" fill="#e8b04a" stroke="#a8741c" stroke-width=".7"/><path d="M1 14l2.500-6.500h12.300L13 14z" fill="#fbe0a0" stroke="#a8741c" stroke-width=".7"/></svg>
<div class="abs" style="left:23px;top:170px;width:111px;height:24px;background:#25270a;clip-path:polygon(1.5px 3.2px,70px 1.6px,109px 5.5px,109.3px 18.2px,45px 20.6px,3.5px 22.6px);filter:blur(.4px)"></div>
<svg style="left:31.50px;top:174.50px" width="13.33" height="13.33" viewBox="0 0 16 16"><rect x=".5" y="2" width="15" height="12" fill="#f2f200" stroke="#0e0f00" stroke-width=".9"/><rect x="1.300" y="2.800" width="13.400" height="10.400" fill="none" stroke="#b9b900" stroke-width=".7"/><rect x="3.500" y="5" width="3.800" height="6.500" fill="#0a5a1a"/><path d="M8.800 6h4.500M8.800 8.200h4.500M8.800 10.400h3" stroke="#b8b800" stroke-width="1"/></svg>
<div class="abs" style="left:418px;top:66px;width:139px;height:18px;background:#1c1f22;"></div>
<div class="abs" style="left:557px;top:66px;width:125.5px;height:18px;background:#2c3135;border-right:1px solid #363a3f"></div>
<svg style="left:421.00px;top:68.60px" width="13.00" height="13.00" viewBox="0 0 16 16"><path d="M4.500 1h7l3 3v10.500h-10z" fill="#f6f7fa" stroke="#b49233" stroke-width=".9"/><path d="M11.500 1v3h3" fill="#e9e2c6" stroke="#b49233" stroke-width=".7"/><path d="M10.500 4.500v5c0 1.500-1 2.300-2.700 1.800" stroke="#2f66c0" stroke-width="1.700" fill="none"/><path d="M3.500 8.500L7 14.800H0z" fill="#f1bd4b" stroke="#c18d20" stroke-width=".5"/><path d="M3.500 10.500v2.200M3.500 13.300v.8" stroke="#3a2a00" stroke-width="1"/></svg>
<svg style="left:540.80px;top:70.30px" width="10.40" height="10.40" viewBox="0 0 16 16"><path d="M3.500 1.500L8 5.500l4.500-4L15 4l-4.500 4 4.500 4-2.500 2.500L8 10.500l-4.500 4L1 12l4.500-4L1 4z" fill="#15171a" stroke="#f0f0f0" stroke-width="1.350" stroke-linejoin="miter"/></svg>
<svg style="left:560.80px;top:68.30px" width="13.00" height="13.00" viewBox="0 0 16 16"><path d="M3.500 3h7l3.200 3.200V15.500H3.500z" fill="#6a7078" stroke="#9a8a5a" stroke-width=".9"/><path d="M10.500 3v3.200h3.200" fill="#8a9098" stroke="#9a8a5a" stroke-width=".6"/><path d="M2.500 .5v3.200c0 1.100-.8 1.600-2 1.300" stroke="#3f6fb4" stroke-width="1.300" fill="none"/><text x="4.800" y="13.800" font-family="Liberation Sans,sans-serif" font-size="6.500" font-weight="bold" fill="#d9dde2">01</text></svg>
<svg style="left:1561.500px;top:71px" width="9" height="3.500" viewBox="0 0 11.200 4"><rect x=".6" y=".6" width="10" height="2.800" fill="none" stroke="#62676c" stroke-width="1.200"/></svg>
<svg style="left:1581px;top:71px" width="8.500" height="8.500" viewBox="0 0 11 10.500"><rect x=".6" y=".6" width="9.800" height="9.300" fill="none" stroke="#62676c" stroke-width="1.200"/><path d="M.6 3.200h9.800" stroke="#62676c" stroke-width="1"/></svg>
<div class="abs dark" style="left:418px;top:84px;width:1179px;height:540px;overflow:hidden">
<div id="lnum" class="abs" style="left:-0.5px;top:0.8px">
<div>1</div>
<div>12</div>
<div>13</div>
<div>14</div>
<div>15</div>
<div>16</div>
<div>17</div>
<div>18</div>
<div>19</div>
<div>20</div>
<div>21</div>
<div>22</div>
<div>23</div>
<div>24</div>
<div>25</div>
<div>26</div>
<div>27</div>
<div>28</div>
<div>29</div>
<div>30</div>
<div>31</div>
<div>32</div>
<div>33</div>
<div>34</div>
<div>35</div>
<div>36</div>
<div>37</div>
<div>38</div>
<div>39</div>
<div>40</div>
</div>
<div id="code" class="abs" style="left:38.6px;top:0.5px">
<div><span class="k">import</span> <span class="i">java.util.concurrent.TimeUnit;</span></div>
<div></div>
<div><span class="k">public</span> <span class="k">class</span> LambdaTestLogin {</div>
<div></div>
<div>    <span class="c">//Created reference of WebDriver</span></div>
<div>    <span class="k">public</span> <span class="k">static</span> WebDriver <span class="f">driver</span>;</div>
<div></div>
<div>    <span class="c">//Execute before test starts</span></div>
<div>    <span class="a">@BeforeTest</span></div>
<div>    <span class="k">public</span> <span class="k">void</span> setUp()</div>
<div>    {</div>
<div>        <span class="c">//setting property for the Chrome Driver with providing path of chrome driver.exe</span></div>
<div>        String userDir = System.getProperty(<span class="s">"user.dir"</span>);</div>
<div>        System.setProperty(<span class="s">"webdriver.chrome.driver"</span>, userDir+<span class="s">"\\chromedriver.exe"</span>);</div>
<div></div>
<div>        <span class="c">//Chrome Driver object is created, it will open the chrome browser window</span></div>
<div>        <span class="f">driver</span> = <span class="k">new</span> ChromeDriver();</div>
<div></div>
<div>        <span class="c">//maximize the browser window</span></div>
<div>        <span class="f">driver</span>.manage().window().maximize();</div>
<div></div>
<div>        <span class="c">//Added implicit wait</span></div>
<div>        <span class="f">driver</span>.manage().timeouts().implicitlyWait(<span class="n">10</span>, TimeUnit.<span class="sc">SECONDS</span>);</div>
<div></div>
<div>        <span class="c">//Added to wait till page gets loaded completely</span></div>
<div>        <span class="f">driver</span>.manage().timeouts().pageLoadTimeout(<span class="n">15</span>, TimeUnit.<span class="sc">SECONDS</span>);</div>
<div></div>
<div>    }</div>
<div></div>
<div></div>

</div>
<svg style="left:359.43px;top:218.61px" width="55.00" height="2"><polyline points="0.00,0.25 1.41,1.75 2.82,0.25 4.23,1.75 5.64,0.25 7.05,1.75 8.46,0.25 9.87,1.75 11.28,0.25 12.69,1.75 14.10,0.25 15.51,1.75 16.92,0.25 18.33,1.75 19.74,0.25 21.15,1.75 22.56,0.25 23.97,1.75 25.38,0.25 26.79,1.75 28.21,0.25 29.62,1.75 31.03,0.25 32.44,1.75 33.85,0.25 35.26,1.75 36.67,0.25 38.08,1.75 39.49,0.25 40.90,1.75 42.31,0.25 43.72,1.75 45.13,0.25 46.54,1.75 47.95,0.25 49.36,1.75 50.77,0.25 52.18,1.75 53.59,0.25 55.00,1.75" fill="none" stroke="#df6fa6" stroke-width="1"/></svg>
<svg style="left:698.60px;top:218.61px" width="55.00" height="2"><polyline points="0.00,0.25 1.41,1.75 2.82,0.25 4.23,1.75 5.64,0.25 7.05,1.75 8.46,0.25 9.87,1.75 11.28,0.25 12.69,1.75 14.10,0.25 15.51,1.75 16.92,0.25 18.33,1.75 19.74,0.25 21.15,1.75 22.56,0.25 23.97,1.75 25.38,0.25 26.79,1.75 28.21,0.25 29.62,1.75 31.03,0.25 32.44,1.75 33.85,0.25 35.26,1.75 36.67,0.25 38.08,1.75 39.49,0.25 40.90,1.75 42.31,0.25 43.72,1.75 45.13,0.25 46.54,1.75 47.95,0.25 49.36,1.75 50.77,0.25 52.18,1.75 53.59,0.25 55.00,1.75" fill="none" stroke="#df6fa6" stroke-width="1"/></svg>
<svg style="left:130.27px;top:292.02px" width="55.00" height="2"><polyline points="0.00,0.25 1.41,1.75 2.82,0.25 4.23,1.75 5.64,0.25 7.05,1.75 8.46,0.25 9.87,1.75 11.28,0.25 12.69,1.75 14.10,0.25 15.51,1.75 16.92,0.25 18.33,1.75 19.74,0.25 21.15,1.75 22.56,0.25 23.97,1.75 25.38,0.25 26.79,1.75 28.21,0.25 29.62,1.75 31.03,0.25 32.44,1.75 33.85,0.25 35.26,1.75 36.67,0.25 38.08,1.75 39.49,0.25 40.90,1.75 42.31,0.25 43.72,1.75 45.13,0.25 46.54,1.75 47.95,0.25 49.36,1.75 50.77,0.25 52.18,1.75 53.59,0.25 55.00,1.75" fill="none" stroke="#df6fa6" stroke-width="1"/></svg>
<svg style="left:588.60px;top:292.02px" width="55.00" height="2"><polyline points="0.00,0.25 1.41,1.75 2.82,0.25 4.23,1.75 5.64,0.25 7.05,1.75 8.46,0.25 9.87,1.75 11.28,0.25 12.69,1.75 14.10,0.25 15.51,1.75 16.92,0.25 18.33,1.75 19.74,0.25 21.15,1.75 22.56,0.25 23.97,1.75 25.38,0.25 26.79,1.75 28.21,0.25 29.62,1.75 31.03,0.25 32.44,1.75 33.85,0.25 35.26,1.75 36.67,0.25 38.08,1.75 39.49,0.25 40.90,1.75 42.31,0.25 43.72,1.75 45.13,0.25 46.54,1.75 47.95,0.25 49.36,1.75 50.77,0.25 52.18,1.75 53.59,0.25 55.00,1.75" fill="none" stroke="#df6fa6" stroke-width="1"/></svg>
<svg style="left:0.20px;top:1.60px" width="12.80" height="12.80" viewBox="0 0 16 16"><circle cx="6" cy="6" r="5" fill="#f6d98a" stroke="#d9a53a" stroke-width=".8"/><circle cx="5" cy="5" r="2.200" fill="#fdf3cf"/><rect x="4" y="11" width="4" height="3.500" fill="#c9ccd4" stroke="#8a8d95" stroke-width=".5"/><path d="M11 7.500l4 7.500H7z" fill="#f1bd4b" stroke="#fdf3cf" stroke-width=".6"/><path d="M11 10v2.500M11 13.200v.8" stroke="#3a2a00" stroke-width="1"/></svg>
<svg style="left:28.20px;top:3.90px" width="8.30" height="8.30" viewBox="0 0 10 10"><circle cx="5" cy="5" r="4.600" fill="#a8bfd0"/><path d="M5 2.500v5" stroke="#1c1f22" stroke-width="1.300"/><path d="M3.600 5h2.800" stroke="#1c1f22" stroke-width=".001"/></svg>
<svg style="left:28.20px;top:150.60px" width="8.30" height="8.30" viewBox="0 0 10 10"><circle cx="5" cy="5" r="4.600" fill="#9aa7ad"/><path d="M2.800 5h4.400" stroke="#dfe6ea" stroke-width="1.200"/></svg>
<div class="abs" style="left:378px;top:1.6px;width:10.3px;height:14.6px;background:#131517;border:1.3px solid #8f979e;box-shadow:0 0 0 .6px #0a0b0c"></div>
<div class="abs" style="left:380.6px;top:12.9px;width:1.5px;height:1.3px;background:#6d747a;"></div>
<div class="abs" style="left:384.2px;top:12.9px;width:1.5px;height:1.3px;background:#6d747a;"></div>
<div class="abs" style="left:1162px;top:228px;width:6.2px;height:306px;background:#3a4047;border-radius:3px"></div>
<div class="abs" style="left:1161px;top:-0.5px;width:8px;height:230px;background:#0c0d0f;border-radius:4px"></div>
<div class="abs" style="left:1162px;top:0px;width:6.2px;height:228.5px;background:#7b8894;border-radius:3px"></div>
<div class="abs" style="left:1169.5px;top:0px;width:9.5px;height:540px;background:#1c1f22;"></div>
<div class="abs" style="left:1170.6px;top:3.6px;width:6.2px;height:6.4px;background:#fbd21e;box-shadow:0 0 0 .7px #8c8f93"></div>
<div class="abs" style="left:1170px;top:14px;width:8.3px;height:5px;background:#6f5e14;border:1.300px solid #e0bd2c"></div>
<div class="abs" style="left:1169.5px;top:13px;width:9.5px;height:1px;background:#8c8f93;"></div>
</div>
<div class="abs" style="left:418px;top:627.5px;width:1179px;height:1.2px;background:#363b40;"></div>
<div class="abs" style="left:616px;top:627.3px;width:76.5px;height:1.2px;background:#4d5257;"></div>
<div class="abs" style="left:616px;top:628.5px;width:76.5px;height:18px;background:#1c1f22;"></div>
<div class="abs" style="left:484px;top:629px;width:1px;height:17px;background:#33383c;"></div>
<div class="abs" style="left:542px;top:629px;width:1px;height:17px;background:#33383c;"></div>
<div class="abs" style="left:616px;top:629px;width:1px;height:17px;background:#33383c;"></div>
<div class="abs" style="left:692.5px;top:629px;width:1px;height:17px;background:#33383c;"></div>
<div class="abs" style="left:899.5px;top:629px;width:1px;height:17px;background:#33383c;"></div>
<svg style="left:421.50px;top:630.50px" width="12.50" height="12.50" viewBox="0 0 16 16"><rect x="1" y="1" width="11" height="14" fill="#8c9096" stroke="#6d7177" stroke-width=".6"/><circle cx="6" cy="5" r="2.600" fill="#d93a32"/><path d="M6 9l3 5.500H3z" fill="#e8b83a"/><path d="M11 3l3.500 2v8l-3.500 2" fill="#6d7177"/></svg>
<svg style="left:488.50px;top:632.00px" width="10.50" height="10.50" viewBox="0 0 16 16"><circle cx="8" cy="8.500" r="5.800" fill="#5f82b4"/><circle cx="8" cy="8.500" r="2" fill="none" stroke="#1c1f22" stroke-width="1.200"/><path d="M10 6.500v3.300c0 .8 1.400.8 1.600-.5" stroke="#1c1f22" stroke-width="1.100" fill="none"/></svg>
<svg style="left:546.00px;top:630.50px" width="12.50" height="12.50" viewBox="0 0 16 16"><path d="M1.500 1h8l3 3v10.500h-11z" fill="#7f848a" stroke="#a8893a" stroke-width=".9"/><path d="M5.500 4.500c-1.500 0-.5 3-2 3 1.500 0 .5 3 2 3M8 4.500c1.500 0 .5 3 2 3-1.500 0-.5 3-2 3" stroke="#d5d8dc" stroke-width=".9" fill="none"/><path d="M8 13h6M12 10.800l2.500 2.200-2.500 2.200" stroke="#d9a83a" stroke-width="1.300" fill="none"/></svg>
<svg style="left:621.00px;top:631.00px" width="11.00" height="11.00" viewBox="0 0 16 16"><rect x="1" y="1.500" width="14" height="10.500" rx="1" fill="#e9eef8" stroke="#3f66b8" stroke-width="1.400"/><path d="M4 5h8M4 7.500h5" stroke="#3f66b8" stroke-width="1.200"/><rect x="2.500" y="13.200" width="11" height="1.800" fill="#3f66b8"/></svg>
<svg style="left:677.20px;top:632.20px" width="10.60" height="10.60" viewBox="0 0 16 16"><path d="M3.500 1.500L8 5.500l4.500-4L15 4l-4.500 4 4.500 4-2.500 2.500L8 10.500l-4.500 4L1 12l4.500-4L1 4z" fill="#15171a" stroke="#f0f0f0" stroke-width="1.350" stroke-linejoin="miter"/></svg>
<svg style="left:696.00px;top:631.00px" width="12.00" height="12.00" viewBox="0 0 16 16"><text x="0" y="13.500" font-family="Liberation Sans,sans-serif" font-weight="bold" font-size="14" textLength="8" lengthAdjust="spacingAndGlyphs" fill="#8e2a25">N</text><text x="8" y="14.500" font-family="Liberation Sans,sans-serif" font-weight="bold" font-size="14" textLength="8.500" lengthAdjust="spacingAndGlyphs" fill="#c29a32">G</text></svg>
<svg style="left:1478.00px;top:631.50px" width="12.00" height="12.00" viewBox="0 0 16 16"><rect x="1" y="5" width="12" height="10" fill="#f0f1f3" stroke="#b9bcc0" stroke-width=".8"/><path d="M3 8l3.500 3.500L12 7" stroke="#d9dbde" stroke-width="1" fill="none"/><path d="M9 7.500l3-3" stroke="#8a8d91" stroke-width="1"/><circle cx="12.500" cy="3.500" r="2.200" fill="#a0a4a9"/></svg>
<svg style="left:1498.00px;top:631.00px" width="11.50" height="11.50" viewBox="0 0 16 16"><rect x="1.500" y="1" width="12" height="9.500" rx="1" fill="#3b3f45" stroke="#a9adb2" stroke-width="1.500"/><path d="M4 4.500h6M4 7h4" stroke="#c4c7cb" stroke-width="1"/><path d="M7.500 11v2.500M3 14.200h9.500" stroke="#a9adb2" stroke-width="1.500"/></svg>
<svg style="left:1515.50px;top:636.20px" width="6.8" height="4" viewBox="0 0 8.4 5"><path d="M0 0H8.4L4.2 4.6Z" fill="#5b6066"/></svg>
<svg style="left:1529.00px;top:631.50px" width="12.50" height="12.50" viewBox="0 0 16 16"><rect x="1" y="3" width="12" height="12" fill="#f4f6fa" stroke="#c9a24a" stroke-width=".9"/><rect x="1" y="3" width="12" height="3" fill="#4a8ad4"/><path d="M12.500 0l1.100 2.400 2.400.4-1.800 1.700.5 2.500-2.200-1.300-2.200 1.300.5-2.500L9 2.800l2.400-.4z" fill="#fbe9ae" stroke="#d9a93a" stroke-width=".6"/></svg>
<svg style="left:1544.50px;top:636.00px" width="8" height="5" viewBox="0 0 8.4 5"><path d="M0 0H8.4L4.2 4.6Z" fill="#d0d0d0"/></svg>
<svg style="left:1561.500px;top:632.800px" width="9" height="3.500" viewBox="0 0 11.200 4"><rect x=".6" y=".6" width="10" height="2.800" fill="none" stroke="#62676c" stroke-width="1.200"/></svg>
<svg style="left:1581px;top:632.800px" width="8.500" height="8.500" viewBox="0 0 11 10.500"><rect x=".6" y=".6" width="9.800" height="9.300" fill="none" stroke="#62676c" stroke-width="1.200"/><path d="M.6 3.200h9.800" stroke="#62676c" stroke-width="1"/></svg>
<div class="abs" style="left:418px;top:658.6px;width:1180px;height:3.2px;background:#0a0b0c;"></div>
<div class="abs" style="left:418px;top:659.2px;width:1180px;height:1.6px;background:#fafafa;"></div>
<svg style="left:1339.00px;top:848.00px" width="2" height="16" viewBox="0 0 2 16"><rect x="0" y="0.40" width="1.5" height="1.7" fill="#dcdcdc"/><rect x="0" y="3.50" width="1.5" height="1.7" fill="#dcdcdc"/><rect x="0" y="6.60" width="1.5" height="1.7" fill="#dcdcdc"/><rect x="0" y="9.70" width="1.5" height="1.7" fill="#dcdcdc"/><rect x="0" y="12.80" width="1.5" height="1.7" fill="#dcdcdc"/></svg>
<div class="abs" style="left:1526px;top:850.5px;width:27px;height:11px;background:#e6e6e6;border-right:1.500px solid #2d9a3a"></div>
<svg style="left:1556.50px;top:850.00px" width="12.00" height="12.00" viewBox="0 0 16 16"><rect x="1" y="2" width="10" height="7" fill="#cfd6dc" stroke="#7d8890" stroke-width=".8"/><rect x="3.500" y="4.500" width="10" height="7" fill="#dfe5ea" stroke="#7d8890" stroke-width=".8"/><rect x="6" y="7" width="9.500" height="7" fill="#eef2f5" stroke="#7d8890" stroke-width=".8"/><rect x="4.500" y="6" width="5" height="2.500" fill="#3fae4a"/></svg>
<svg style="left:1577.50px;top:848.00px" width="2" height="16" viewBox="0 0 2 16"><rect x="0" y="0.40" width="1.5" height="1.7" fill="#dcdcdc"/><rect x="0" y="3.50" width="1.5" height="1.7" fill="#dcdcdc"/><rect x="0" y="6.60" width="1.5" height="1.7" fill="#dcdcdc"/><rect x="0" y="9.70" width="1.5" height="1.7" fill="#dcdcdc"/><rect x="0" y="12.80" width="1.5" height="1.7" fill="#dcdcdc"/></svg>
<svg style="left:1584.50px;top:849.50px" width="12.50" height="12.50" viewBox="0 0 16 16"><path d="M8 .8c3 0 5 2.200 5 4.800 0 2-1.300 3-2 4.400v1.500H5V10C4.300 8.600 3 7.600 3 5.600 3 3 5 .8 8 .8z" fill="#f5cf5a" stroke="#c9952a" stroke-width=".7"/><ellipse cx="7" cy="4.800" rx="2" ry="2.600" fill="#fdf0b8"/><rect x="5.500" y="11.800" width="5" height="3.400" rx=".8" fill="#c4c9d4" stroke="#7f8794" stroke-width=".5"/></svg>
<div class="abs" style="left:0px;top:867px;width:1600px;height:4px;background:#1b2f36;"></div>
<div class="abs" style="left:408px;top:867px;width:40px;height:4px;background:#5a6b70;"></div>
<div class="t" style="left:19.00px;top:4.50px;color:#000;font-size:10px;letter-spacing:-0.371px;">Core Java - Eclipse IDE</div>
<div class="t" style="left:6.00px;top:22.00px;color:#000;font-size:10px;letter-spacing:-0.375px;">File</div>
<div class="t" style="left:32.00px;top:22.00px;color:#000;font-size:10px;letter-spacing:-0.078px;">Edit</div>
<div class="t" style="left:60.00px;top:22.00px;color:#000;font-size:10px;letter-spacing:-0.138px;">Source</div>
<div class="t" style="left:102.00px;top:22.00px;color:#000;font-size:10px;letter-spacing:0.029px;">Refactor</div>
<div class="t" style="left:151.00px;top:22.00px;color:#000;font-size:10px;letter-spacing:-0.067px;">Navigate</div>
<div class="t" style="left:201.00px;top:22.00px;color:#000;font-size:10px;letter-spacing:-0.338px;">Search</div>
<div class="t" style="left:242.00px;top:22.00px;color:#000;font-size:10px;letter-spacing:-0.021px;">Project</div>
<div class="t" style="left:285.00px;top:22.00px;color:#000;font-size:10px;letter-spacing:-0.680px;">Run</div>
<div class="t" style="left:314.00px;top:22.00px;color:#000;font-size:10px;letter-spacing:0.284px;">Window</div>
<div class="t" style="left:362.00px;top:22.00px;color:#000;font-size:10px;letter-spacing:0.141px;">Help</div>
<div class="t" style="left:1439.70px;top:43.40px;color:#6a6e72;font-size:11.2px;transform:scaleX(0.8637);transform-origin:0 0">Quick Access</div>
<div class="t" style="left:22.00px;top:70.00px;color:#f2f2f2;font-size:10px;letter-spacing:-0.263px;">Package Explorer</div>
<div class="t" style="left:36.00px;top:86.09px;color:#dcdfe2;font-size:10px;letter-spacing:-0.241px;">Project1</div>
<div class="t" style="left:49.00px;top:101.09px;color:#dcdfe2;font-size:10px;letter-spacing:-0.433px;">JRE System Library</div>
<div class="t" style="left:132.50px;top:101.09px;color:#b7a56c;font-size:10px;letter-spacing:-0.524px;">[JavaSE-1.8]</div>
<div class="t" style="left:49.00px;top:116.09px;color:#dcdfe2;font-size:10px;letter-spacing:-0.422px;">src</div>
<div class="t" style="left:49.00px;top:131.09px;color:#dcdfe2;font-size:10px;letter-spacing:-0.201px;">Referenced Libraries</div>
<div class="t" style="left:49.00px;top:146.09px;color:#dcdfe2;font-size:10px;letter-spacing:-0.469px;">TestNG</div>
<div class="t" style="left:49.00px;top:161.09px;color:#dcdfe2;font-size:10px;letter-spacing:0.273px;">test-output</div>
<div class="t" style="left:49.00px;top:176.09px;color:#c3d100;font-size:10px;letter-spacing:0.020px;">chromedriver.exe</div>
<div class="t" style="left:437.70px;top:70.00px;color:#f2f2f2;font-size:10px;letter-spacing:-0.146px;">LambdaTestLogin.java</div>
<div class="t" style="left:576.00px;top:70.00px;color:#5d6368;font-size:10px;letter-spacing:-0.132px;">ChromeDriver.class</div>
<div class="t" style="left:438.00px;top:632.39px;color:#70767c;font-size:10px;letter-spacing:-0.107px;">Problems</div>
<div class="t" style="left:503.50px;top:632.39px;color:#70767c;font-size:10px;letter-spacing:-0.458px;">Javadoc</div>
<div class="t" style="left:562.00px;top:632.39px;color:#70767c;font-size:10px;letter-spacing:-0.059px;">Declaration</div>
<div class="t" style="left:635.00px;top:632.39px;color:#f2f2f2;font-size:10px;letter-spacing:-0.117px;">Console</div>
<div class="t" style="left:712.00px;top:632.39px;color:#70767c;font-size:10px;letter-spacing:-0.125px;">Results of running class LambdaTestLogin</div>
<div class="t" style="left:418.50px;top:648.10px;color:#7fc6c0;font-size:10px;letter-spacing:-0.042px;">No consoles to display at this time.</div>
</body>
</html>
